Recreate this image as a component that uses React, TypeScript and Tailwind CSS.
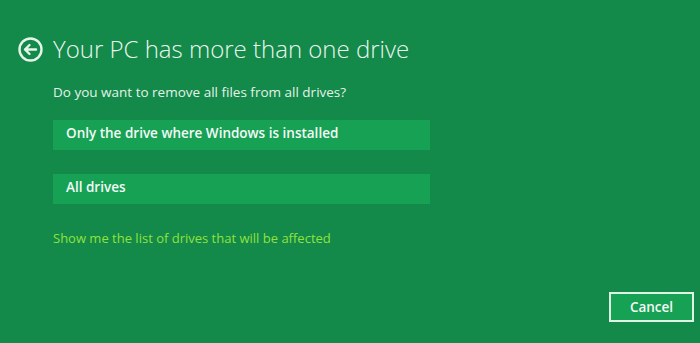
import React from "react";

export default function App() {
  return (
    <div
      className="w-[700px] h-[343px] bg-[#13894a] text-white flex flex-col relative overflow-hidden"
      style={{ fontFamily: '"Open Sans", "Noto Sans", sans-serif' }}
    >
      <div className="flex items-center pl-[18px] pt-[33px] h-[65px]">
        <svg width="25" height="25" viewBox="0 0 25 25" className="shrink-0">
          <circle cx="12.5" cy="12.5" r="11" fill="none" stroke="#e6f5ea" strokeWidth="2.4" />
          <path d="M7 12.5 H18 M11.5 8 L7 12.5 L11.5 17" fill="none" stroke="#e6f5ea" strokeWidth="2.4" strokeLinecap="round" strokeLinejoin="round" />
        </svg>
        <h1 className="ml-[10px] text-[24px] leading-[32px] font-light text-[#eaf6ee]">
          Your PC has more than one drive
        </h1>
      </div>
      <div className="pl-[53px] flex flex-col">
        <p className="mt-[18px] text-[13.5px] leading-[18px] text-[#e4f3e8]">
          Do you want to remove all files from all drives?
        </p>
        <button className="mt-[19px] w-[377px] h-[30px] bg-[#17a155] text-left pl-[13px] pb-[3px] text-[13.5px] font-semibold text-[#f3fbf5]">
          Only the drive where Windows is installed
        </button>
        <button className="mt-[24px] w-[377px] h-[30px] bg-[#17a155] text-left pl-[13px] pb-[3px] text-[13.5px] font-semibold text-[#f3fbf5]">
          All drives
        </button>
        <a className="mt-[25px] text-[13px] leading-[18px] text-[#8fe33d]">
          Show me the list of drives that will be affected
        </a>
      </div>
      <div className="flex justify-end pr-[6px] mt-[45px]">
        <button className="w-[85px] h-[30px] border-2 border-[#dff3e4] bg-[#17a155] text-[13.5px] font-semibold text-[#f3fbf5]">
          Cancel
        </button>
      </div>
    </div>
  );
}
